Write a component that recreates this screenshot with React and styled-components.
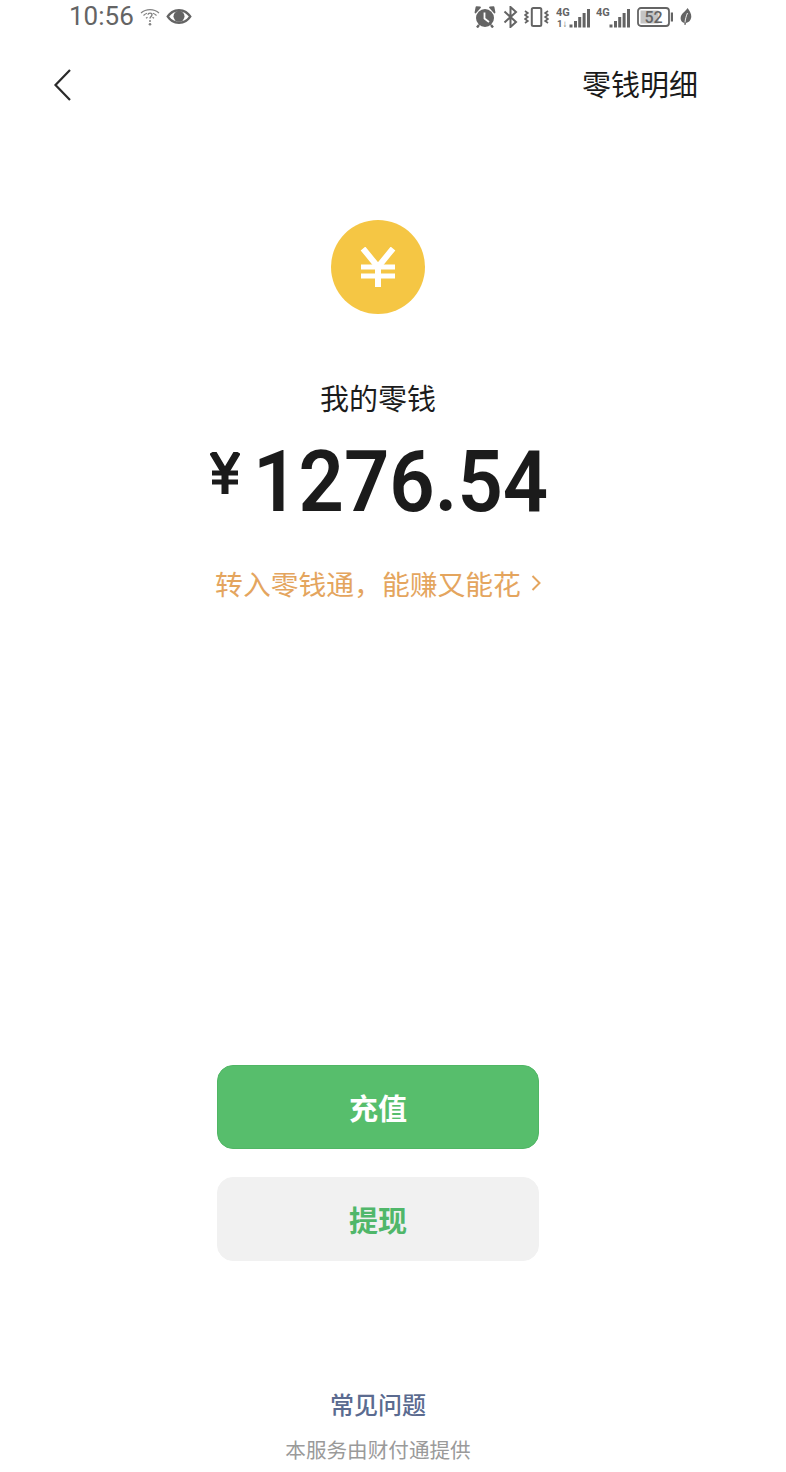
import React from "react";
import styled, { createGlobalStyle } from "styled-components";

const GlobalStyle = createGlobalStyle`
  html, body {
    margin: 0;
    padding: 0;
    background: #fff;
  }
`;

const Page = styled.div`
  width: 756px;
  height: 1472px;
  display: flex;
  flex-direction: column;
  align-items: center;
  overflow: hidden;
  font-family: "Noto Sans CJK SC", "Noto Sans", sans-serif;
  background: #fff;
`;

const StatusBar = styled.div`
  align-self: stretch;
  height: 33px;
  display: flex;
  align-items: center;
  justify-content: space-between;
  padding: 0 64px 0 69px;
  color: #646464;
`;

const StatusLeft = styled.div`
  display: flex;
  align-items: center;
  gap: 6px;
`;

const Time = styled.span`
  font-family: Roboto, sans-serif;
  font-size: 26px;
  line-height: 33px;
`;

const StatusRight = styled.div`
  display: flex;
  align-items: center;
  gap: 6.5px;
`;

const NavBar = styled.div`
  align-self: stretch;
  height: 70px;
  margin-top: 17px;
  display: flex;
  align-items: center;
  justify-content: space-between;
  padding: 0 58px 0 52px;
`;

const NavTitle = styled.span`
  font-size: 29px;
  line-height: 40px;
  padding-bottom: 4px;
  color: #1a1a1a;
`;

const Coin = styled.div`
  width: 94px;
  height: 94px;
  margin-top: 100px;
  border-radius: 50%;
  background: #f5c644;
  display: flex;
  align-items: center;
  justify-content: center;
`;

const Label = styled.div`
  margin-top: 61px;
  font-size: 29px;
  line-height: 44px;
  color: #1c1c1c;
`;

const Amount = styled.div`
  margin-top: 17px;
  height: 92px;
  display: flex;
  align-items: flex-start;
  color: #1b1b1b;
  font-family: Roboto, sans-serif;
  font-weight: 600;
`;

const Digits = styled.span`
  display: block;
  width: 293px;
  margin-left: 13px;
  font-size: 86px;
  line-height: 92px;
  white-space: nowrap;
  transform: scaleX(0.925);
  transform-origin: left center;
`;

const YuanMark = styled.svg`
  margin-top: 16px;
`;

const PromoLink = styled.div`
  margin-top: 35px;
  display: flex;
  align-items: center;
  gap: 10px;
  font-size: 27.8px;
  line-height: 40px;
  color: #e4a55e;
`;

const ActionButton = styled.div`
  width: 322px;
  height: 84px;
  box-sizing: border-box;
  margin-top: ${(p) => p.$top}px;
  border-radius: 16px;
  border: 1px solid ${(p) => (p.$primary ? "#50b665" : "#f1f1f1")};
  display: flex;
  align-items: center;
  justify-content: center;
  font-size: 29px;
  font-weight: 700;
  background: ${(p) => (p.$primary ? "#57be6c" : "#f1f1f1")};
  color: ${(p) => (p.$primary ? "#fff" : "#50b76a")};
`;

const FaqLink = styled.div`
  margin-top: 126px;
  font-size: 24px;
  font-weight: 500;
  line-height: 34px;
  color: #5b6b90;
`;

const Provider = styled.div`
  margin-top: 13px;
  font-size: 20.6px;
  line-height: 30px;
  color: #9a9a9a;
`;

const WifiQuestion = () => (
  <svg width="20" height="18" viewBox="0 0 20 18" fill="none" stroke="currentColor" opacity="0.8">
    <path d="M1 5C6 .5 14 .5 19 5" strokeWidth="1.200" />
    <path d="M3.500 7.500C4.800 6.300 5.800 5.700 7 5.300M16.500 7.500C15.200 6.300 14.200 5.700 13 5.300" strokeWidth="1.200" />
    <path d="M6 10.300 7.500 9.200M14 10.300 12.500 9.200" strokeWidth="1.200" />
    <path d="M8 6.800C8.200 4.600 12 4.600 12 6.800 12 8.500 10 8.400 10 10.500" strokeWidth="1.400" />
    <circle cx="10" cy="13" r="1" fill="currentColor" stroke="none" />
    <circle cx="10" cy="16.300" r="1.300" fill="currentColor" stroke="none" />
  </svg>
);

const Eye = () => (
  <svg width="26" height="15" viewBox="0 0 26 15">
    <path
      fillRule="evenodd"
      fill="currentColor"
      d="M13 0C7.500 0 3 3 .3 7.500 3 12 7.500 15 13 15s10-3 12.700-7.500C23 3 18.500 0 13 0ZM13 2.400C9 2.400 5.500 4.300 3.200 7.500 5.500 10.700 9 12.600 13 12.600s7.500-1.900 9.800-5.100C20.500 4.300 17 2.400 13 2.400Z"
    />
    <circle cx="13" cy="7.300" r="5.500" fill="currentColor" />
  </svg>
);

const Alarm = () => (
  <svg width="22" height="22" viewBox="0 0 22 22">
    <circle cx="11" cy="12" r="9" fill="currentColor" />
    <path d="M1.500 6.500 6 1.500 2.500 1.200Z M20.500 6.500 16 1.500 19.500 1.200Z" fill="currentColor" stroke="currentColor" strokeWidth="1.800" strokeLinejoin="round" />
    <path d="M10.500 6.500v6l4.500 3.500" fill="none" stroke="#fff" strokeWidth="1.800" />
    <path d="M5 19 3 21.500M17 19l2 2.500" stroke="currentColor" strokeWidth="2.400" />
  </svg>
);

const Bluetooth = () => (
  <svg width="15" height="22" viewBox="0 0 15 22" fill="none" stroke="currentColor" strokeWidth="2">
    <path d="M1.500 5.500 13 16 7.500 21V1L13 6 1.500 16.500" />
  </svg>
);

const Vibrate = () => (
  <svg width="25" height="20" viewBox="0 0 25 20" fill="none" stroke="currentColor" strokeWidth="1.700">
    <rect x="7.800" y="1" width="9.500" height="18" rx="1.500" strokeWidth="2" />
    <path d="M1 4l2.800 2-2.800 2 2.800 2-2.800 2 2.800 2-2.800 2" />
    <path d="M24 4l-2.800 2 2.800 2-2.800 2 2.800 2-2.800 2 2.800 2" />
  </svg>
);

const Signal = ({ second }) => (
  <svg width="34" height="22" viewBox="0 0 34 22">
    <text x="0" y="10" fontFamily="Roboto, sans-serif" fontWeight="700" fontSize="11" fill="currentColor">
      4G
    </text>
    {second && (
      <text x="1" y="21" fontFamily="Roboto, sans-serif" fontWeight="700" fontSize="9.500" fill="currentColor">
        1↓
      </text>
    )}
    <rect x="13.500" y="18.500" width="3" height="3" fill="currentColor" />
    <rect x="18" y="15" width="3" height="6.500" fill="currentColor" />
    <rect x="22.200" y="11" width="3" height="10.500" fill="currentColor" />
    <rect x="26.600" y="7" width="3" height="14.500" fill="currentColor" />
    <rect x="31" y="3" width="3" height="18.500" fill="currentColor" />
  </svg>
);

const Battery = () => (
  <svg width="36" height="20" viewBox="0 0 36 20">
    <rect x="1" y="1" width="31" height="18" rx="3" fill="none" stroke="currentColor" strokeWidth="1.800" />
    <rect x="3.500" y="3.500" width="18" height="13" fill="#c4c4c4" />
    <rect x="33.800" y="5.500" width="2.200" height="9" fill="currentColor" />
    <text x="16.500" y="15.500" textAnchor="middle" fontFamily="Roboto, sans-serif" fontWeight="500" fontSize="16" fill="currentColor">
      52
    </text>
  </svg>
);

const Leaf = () => (
  <svg width="13" height="17" viewBox="0 0 13 17">
    <path d="M8.500 0C10.500 2.500 12.500 5.500 12.300 9 12 12.500 9.500 14.500 7 15L6.500 17H5.500L5.300 15C2 14 1 11 2 8 3 5 6.500 3.500 8.500 0Z" fill="currentColor" />
    <path d="M6 14.500C6.300 11 7.200 8 8.500 5" fill="none" stroke="#fff" strokeWidth="0.900" />
  </svg>
);

const App = () => {
  return (
    <Page>
      <GlobalStyle />
      <StatusBar>
        <StatusLeft>
          <Time>10:56</Time>
          <WifiQuestion />
          <Eye />
        </StatusLeft>
        <StatusRight>
          <Alarm />
          <Bluetooth />
          <Vibrate />
          <Signal second />
          <Signal />
          <Battery />
          <Leaf />
        </StatusRight>
      </StatusBar>
      <NavBar>
        <svg width="22" height="34" viewBox="0 0 22 34" fill="none" stroke="#2a2a2a" strokeWidth="2.200">
          <path d="M18 2 3.500 17 18 32" />
        </svg>
        <NavTitle>零钱明细</NavTitle>
      </NavBar>
      <Coin>
        <svg width="36" height="40" viewBox="0 0 36 40" fill="none" stroke="#fff">
          <path d="M3 1.500 18 20 33 1.500" strokeWidth="6" />
          <path d="M1 20H35M1 29H35" strokeWidth="5" />
          <path d="M18 18V40" strokeWidth="6" />
        </svg>
      </Coin>
      <Label>我的零钱</Label>
      <Amount>
        <YuanMark width="30" height="42" viewBox="0 0 30 42" fill="none" stroke="#1b1b1b">
          <path d="M2.500 0 15 21 27.500 0" strokeWidth="7" />
          <path d="M2 21H28M2 30H28" strokeWidth="5" />
          <path d="M15 19V42" strokeWidth="7" />
        </YuanMark>
        <Digits>1276.54</Digits>
      </Amount>
      <PromoLink>
        {"转入零钱通\uFF0C能赚又能花"}
        <svg width="10" height="18" viewBox="0 0 10 18" fill="none" stroke="#e4a55e" strokeWidth="2">
          <path d="M1.500 2 8.500 9 1.500 16" />
        </svg>
      </PromoLink>
      <ActionButton $primary $top={462}>充值</ActionButton>
      <ActionButton $top={28}>提现</ActionButton>
      <FaqLink>常见问题</FaqLink>
      <Provider>本服务由财付通提供</Provider>
    </Page>
  );
};

export default App;
